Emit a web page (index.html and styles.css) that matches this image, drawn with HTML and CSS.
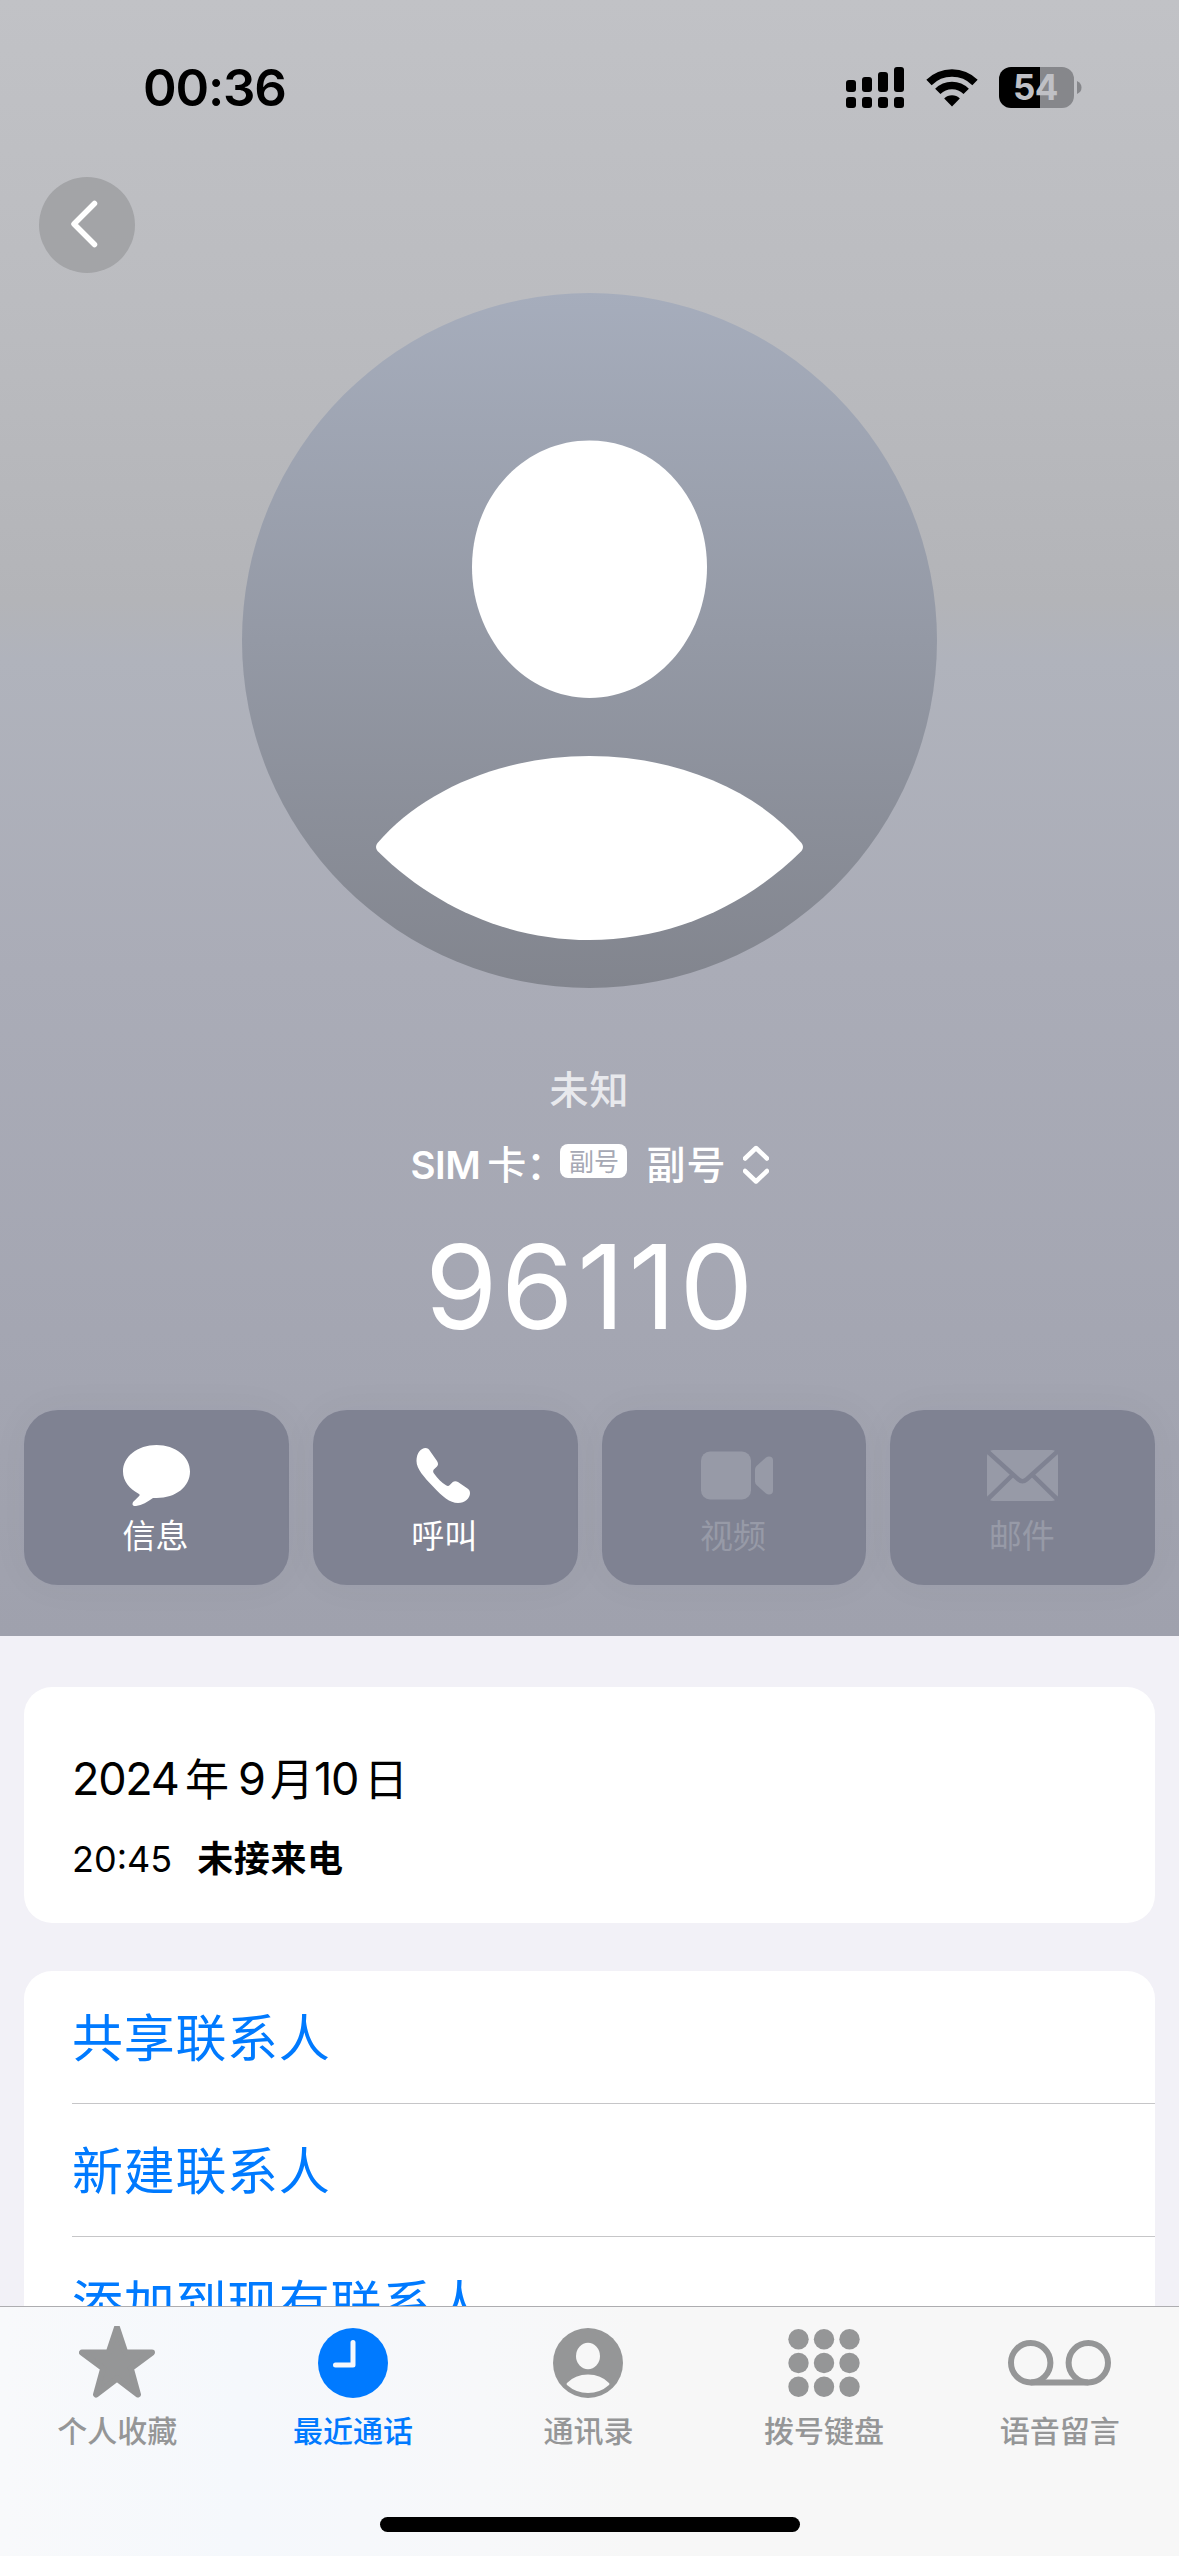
FILE: index.html
```html
<!DOCTYPE html>
<html lang="zh-CN">
<head>
<meta charset="utf-8">
<title>96110</title>
<link rel="stylesheet" href="styles.css">
</head>
<body>
<div class="screen">
  <header class="hero">
    <div class="status">
      <span class="status-time">00:36</span>
      <div class="status-icons">
        <svg class="signal" width="58" height="41" viewBox="0 0 58 41">
          <rect x="0" y="13" width="10" height="12" rx="3"/><rect x="16" y="10" width="10" height="15" rx="3"/>
          <rect x="32" y="5" width="10" height="20" rx="3"/><rect x="48" y="0" width="10" height="25" rx="3"/>
          <rect x="0" y="30" width="10" height="11" rx="3"/><rect x="16" y="30" width="10" height="11" rx="3"/>
          <rect x="32" y="30" width="10" height="11" rx="3"/><rect x="48" y="30" width="10" height="11" rx="3"/>
        </svg>
        <svg class="wifi" width="52" height="38" viewBox="0 0 52 38">
          <path d="M3 13.5A32.5 32.5 0 0 1 49 13.5" class="wifi-arc"/>
          <path d="M11.8 22.3A20 20 0 0 1 40.2 22.3" class="wifi-arc"/>
          <path d="M26 37.5L18.2 29.6A11 11 0 0 1 33.8 29.6Z"/>
        </svg>
        <div class="battery"><span class="battery-level">54</span></div>
        <svg class="battery-tip" width="5" height="13" viewBox="0 0 5 13"><path d="M0 0Q4.5 2 4.5 6.5T0 13Z"/></svg>
      </div>
    </div>
    <div class="nav">
      <button class="back" aria-label="返回">
        <svg width="28" height="48" viewBox="0 0 28 48"><path d="M24.5 3.5L4 24L24.5 44.5"/></svg>
      </button>
    </div>
    <svg class="avatar" width="695" height="695" viewBox="0 0 695 695">
      <defs><linearGradient id="tone" x1="0" y1="0" x2="0" y2="1"><stop offset="0" stop-color="#a6adbc"/><stop offset="1" stop-color="#82858e"/></linearGradient></defs>
      <circle cx="347.5" cy="347.5" r="347.5" fill="url(#tone)"/>
      <path fill="#fff" d="M347.5 147.500C412 147.500 465 202 465 274C465 346 412 405 347.5 405S230 346 230 274C230 202 283 147.500 347.5 147.500Z"/>
      <path fill="#fff" d="M135.500 550C180 498 259 463 347.500 463S515 498 559.500 550Q562.500 554 559.500 558C503 614 428 647 347.500 647S192 614 135.500 558Q132.500 554 135.500 550Z"/>
    </svg>
    <div class="tag">未知</div>
    <div class="sim">
      <span class="sim-label"><span class="sim-latin">SIM</span>卡：</span>
      <span class="sim-badge">副号</span>
      <span class="sim-name">副号</span>
      <svg class="sim-picker" width="26" height="40" viewBox="0 0 26 40"><path d="M2 13.500L13 3L24 13.500M2 26L13 36.500L24 26"/></svg>
    </div>
    <h1 class="number">96110</h1>
    <div class="actions">
      <button class="action">
        <svg width="67" height="61" viewBox="0 0 67 61"><path d="M33.500 0C52.500 0 67 11.500 67 26.500S53 53 33.500 53H30C24.500 57 19 60 13 61C9.500 61.500 8.500 59 10.500 56.500C12.500 54.500 15.500 52 16.500 50.500C16.800 50 16.700 49.500 16 49C6 43.500 0 36 0 26.500C0 11.500 14.500 0 33.500 0Z"/></svg>
        <span>信息</span>
      </button>
      <button class="action action-call">
        <svg width="54" height="55" viewBox="0 0 54 55"><path d="M.5 13C.5 5 5 0 9.500 0C11.500 0 13 1 14 3L21 13C22.500 15.500 22.300 17 21 18.500L17.800 21.500C16.800 22.700 17 24 18 25.500C21.500 30.500 25.500 34.500 30 37.300C31.500 38.200 32.700 38.200 33.800 37L36.500 34.300C38 33 40 32.700 42 34L51.500 40.500C53.300 41.800 54 43 54 45.200C54 50 49 55 42 55C34 55 26 48.500 17 38.500C8 29 .5 21 .5 13Z"/></svg>
        <span>呼叫</span>
      </button>
      <button class="action action-off action-video">
        <svg width="72" height="55" viewBox="0 0 72 55"><g transform="translate(0 3.500)"><rect width="50" height="48" rx="9"/><path d="M54 18Q54 16 55.500 14.500L65 6Q66.500 5 68 5Q72 5 72 9V39Q72 43 68 43Q66.500 43 65 42L55.500 33.500Q54 32 54 30Z"/></g></svg>
        <span>视频</span>
      </button>
      <button class="action action-off">
        <svg width="71" height="51" viewBox="0 0 71 51"><rect width="71" height="51" rx="6"/><path class="mail-fold" d="M0 1L31.500 29.500Q35.500 33 39.500 29.500L71 1M0 50L25.500 25M71 50L45.500 25"/></svg>
        <span>邮件</span>
      </button>
    </div>
  </header>

  <main class="content">
    <section class="card call">
      <div class="call-date"><span>2024</span><span class="unit">年</span><span>9</span><span class="unit">月</span><span>10</span><span class="unit">日</span></div>
      <div class="call-row"><span class="call-time">20:45</span><b class="call-kind">未接来电</b></div>
    </section>
    <section class="card links">
      <a class="link">共享联系人</a>
      <a class="link">新建联系人</a>
      <a class="link">添加到现有联系人</a>
    </section>
  </main>

  <footer class="tabbar">
    <nav class="tabs">
      <a class="tab">
        <svg width="76" height="74" viewBox="0 2 76 74"><path class="star" d="M38 3.500L46.300 28.500H73L51.800 44.300L59 70.500L38 54.500L17 70.500L24.200 44.300L3 28.500H29.700Z"/></svg>
        <span>个人收藏</span>
      </a>
      <a class="tab tab-on">
        <svg width="70" height="70" viewBox="0 0 70 70"><circle cx="35" cy="35" r="35"/><path class="hands" d="M35 14.500V37H17.500"/></svg>
        <span>最近通话</span>
      </a>
      <a class="tab">
        <svg width="70" height="70" viewBox="0 0 70 70"><circle cx="35" cy="35" r="35"/><ellipse class="cut" cx="35" cy="28" rx="12" ry="13.200"/><path class="cut" d="M14 55Q22 46.500 35 46.500T56 55Q57 56 56 57Q47 65 35 65T14 57Q13 56 14 55Z"/></svg>
        <span>通讯录</span>
      </a>
      <a class="tab">
        <svg width="72" height="70" viewBox="0 0 72 70">
          <circle cx="10.500" cy="11.200" r="10.200"/><circle cx="36" cy="11.200" r="10.200"/><circle cx="61.500" cy="11.200" r="10.200"/>
          <circle cx="10.500" cy="35" r="10.200"/><circle cx="36" cy="35" r="10.200"/><circle cx="61.500" cy="35" r="10.200"/>
          <circle cx="10.500" cy="58.800" r="10.200"/><circle cx="36" cy="58.800" r="10.200"/><circle cx="61.500" cy="58.800" r="10.200"/>
        </svg>
        <span>拨号键盘</span>
      </a>
      <a class="tab">
        <svg width="103" height="46" viewBox="0 0 103 46"><g class="reel"><circle cx="22.700" cy="22.700" r="19.700"/><circle cx="80.300" cy="22.700" r="19.700"/><path d="M22.700 42.400H80.300"/></g></svg>
        <span>语音留言</span>
      </a>
    </nav>
    <div class="home-bar"></div>
  </footer>
</div>
</body>
</html>
```
FILE: styles.css
```css
* {
  box-sizing: border-box;
}

body {
  margin: 0;
  font-family: Inter, "Noto Sans CJK SC", sans-serif;
}

button {
  border: 0;
  padding: 0;
  font: inherit;
}

svg {
  display: block;
  flex: none;
}

.screen {
  width: 1179px;
  height: 2556px;
  display: flex;
  flex-direction: column;
  overflow: hidden;
  background: #f2f1f7;
}

.hero {
  flex: none;
  height: 1636px;
  display: flex;
  flex-direction: column;
  align-items: center;
  color: #fff;
  background: linear-gradient(#c1c2c6 0, #bbbcc0 300px, #b3b4b8 600px, #b0b3bc 660px, #aaacb7 970px, #a4a6b2 1330px, #9fa1ad 1636px);
}

.status {
  width: 100%;
  height: 177px;
  padding: 0 97px 0 143px;
  display: flex;
  justify-content: space-between;
  align-items: flex-start;
  color: #000;
}

.status-time {
  padding-top: 58px;
  font-size: 51px;
  font-weight: 600;
  line-height: 60px;
  letter-spacing: -1.2px;
}

.status-icons {
  display: flex;
  align-items: center;
  padding-top: 67px;
}

.wifi {
  margin-left: 22px;
}

.wifi-arc {
  fill: none;
  stroke: #000;
  stroke-width: 7.5;
}

.battery {
  margin-left: 21px;
  width: 75px;
  height: 41px;
  padding-right: 2px;
  border-radius: 12px;
  display: flex;
  justify-content: center;
  background: linear-gradient(90deg, #000 41px, #86878b 41px);
}

.battery-level {
  color: #bfc0c5;
  font-size: 35px;
  font-weight: 700;
  line-height: 41px;
  letter-spacing: -.5px;
}

.battery-tip {
  margin-left: 3px;
  fill: #86878b;
}

.nav {
  width: 100%;
  padding-left: 39px;
}

.back {
  width: 96px;
  height: 96px;
  padding: 0 6px 2px 0;
  border-radius: 50%;
  display: flex;
  align-items: center;
  justify-content: center;
  background: #a3a4a7;
}

.back svg {
  fill: none;
  stroke: #fff;
  stroke-width: 5.5;
  stroke-linecap: round;
  stroke-linejoin: round;
}

.avatar {
  margin-top: 20px;
}

.tag {
  margin-top: 77px;
  font-size: 39px;
  font-weight: 500;
  line-height: 50px;
  letter-spacing: 1px;
  color: #e8e9ed;
}

.sim {
  margin-top: 25px;
  height: 50px;
  display: flex;
  align-items: center;
  font-size: 39px;
  font-weight: 500;
  line-height: 50px;
}

.sim-label {
  width: 150px;
  white-space: nowrap;
}

.sim-latin {
  margin-right: 7px;
  font-size: 38.5px;
  font-weight: 600;
  letter-spacing: -.5px;
}

.sim-badge {
  width: 67px;
  height: 34px;
  margin-bottom: 8px;
  border-radius: 8px;
  text-align: center;
  font-size: 25px;
  font-weight: 400;
  line-height: 36px;
  color: #a6a8b4;
  background: #fff;
}

.sim-name {
  margin-left: 19px;
  letter-spacing: 1px;
}

.sim-picker {
  margin-left: 16px;
  fill: none;
  stroke: #fff;
  stroke-width: 4.5;
  stroke-linecap: round;
  stroke-linejoin: round;
}

.number {
  margin: 37px 0 0;
  padding-left: 3px;
  font-size: 117px;
  font-weight: 400;
  line-height: 120px;
  letter-spacing: 3.6px;
}

.actions {
  margin-top: 63px;
  width: 100%;
  padding: 0 24px;
  display: grid;
  grid-template-columns: repeat(4, 1fr);
  gap: 24px;
}

.action {
  height: 175px;
  padding-top: 35px;
  border-radius: 34px;
  display: grid;
  grid-template-rows: 61px 48px;
  gap: 6px;
  align-content: start;
  place-items: center;
  color: #fff;
  fill: #fff;
  font-size: 33px;
  line-height: 48px;
  background: #7f8292;
  box-shadow: 0 0 40px rgba(60, 62, 80, .04);
}

.action span {
  padding-right: 2px;
  font-weight: 400;
}

.action-call svg {
  margin-right: 5px;
}

.action-video svg {
  margin-left: 6px;
}

.action-off {
  color: #979aa7;
  fill: #979aa7;
}

.mail-fold {
  fill: none;
  stroke: #7f8292;
  stroke-width: 4.5;
}

.content {
  flex: 1;
  min-height: 0;
  overflow: hidden;
  padding: 51px 24px 0;
}

.card {
  border-radius: 28px;
  background: #fff;
}

.call {
  height: 236px;
  padding: 62px 48px 0;
  color: #000;
}

.call-date {
  display: grid;
  grid-template-columns: 113px 53px 32px 44px 50px auto;
  font-size: 45px;
  line-height: 60px;
  letter-spacing: -1.3px;
}

.unit {
  padding-top: 1px;
  font-size: 44px;
}

.call-row {
  margin-top: 24px;
  display: flex;
  gap: 25px;
  font-size: 36px;
  line-height: 50px;
}

.call-kind {
  font-weight: 700;
  letter-spacing: .6px;
}

.links {
  margin-top: 48px;
  padding-left: 48px;
  display: flex;
  flex-direction: column;
}

.link {
  height: 133px;
  flex: none;
  border-bottom: 1px solid #c6c6c8;
  font-size: 51px;
  font-weight: 400;
  line-height: 135px;
  letter-spacing: .7px;
  color: #007aff;
}

.tabbar {
  flex: none;
  height: 250px;
  border-top: 1px solid #adadb0;
  display: flex;
  flex-direction: column;
  align-items: center;
  background: linear-gradient(90deg, #f8f9fb 0, #f5f8fc 240px, #f7f8fa 480px, #f7f7f7 640px, #f7f7f7 1179px);
}

.tabs {
  width: 100%;
  height: 210px;
  padding-right: 1px;
  display: grid;
  grid-template-columns: repeat(5, 1fr);
}

.tab {
  display: grid;
  grid-template-rows: 74px 40px;
  gap: 11px;
  align-content: start;
  place-items: center;
  padding: 19px 1px 0 0;
  color: #959697;
  fill: #959697;
  font-size: 30px;
  font-weight: 500;
  line-height: 40px;
}

.tab-on {
  color: #007aff;
  fill: #007aff;
}

.star {
  stroke: #959697;
  stroke-width: 6;
  stroke-linejoin: round;
}

.hands {
  fill: none;
  stroke: #f6f8fc;
  stroke-width: 5;
  stroke-linecap: round;
  stroke-linejoin: round;
}

.cut {
  fill: #f7f7f7;
}

.reel {
  fill: none;
  stroke: #959697;
  stroke-width: 6;
}

.home-bar {
  width: 420px;
  height: 15px;
  border-radius: 8px;
  background: #000;
}
```
